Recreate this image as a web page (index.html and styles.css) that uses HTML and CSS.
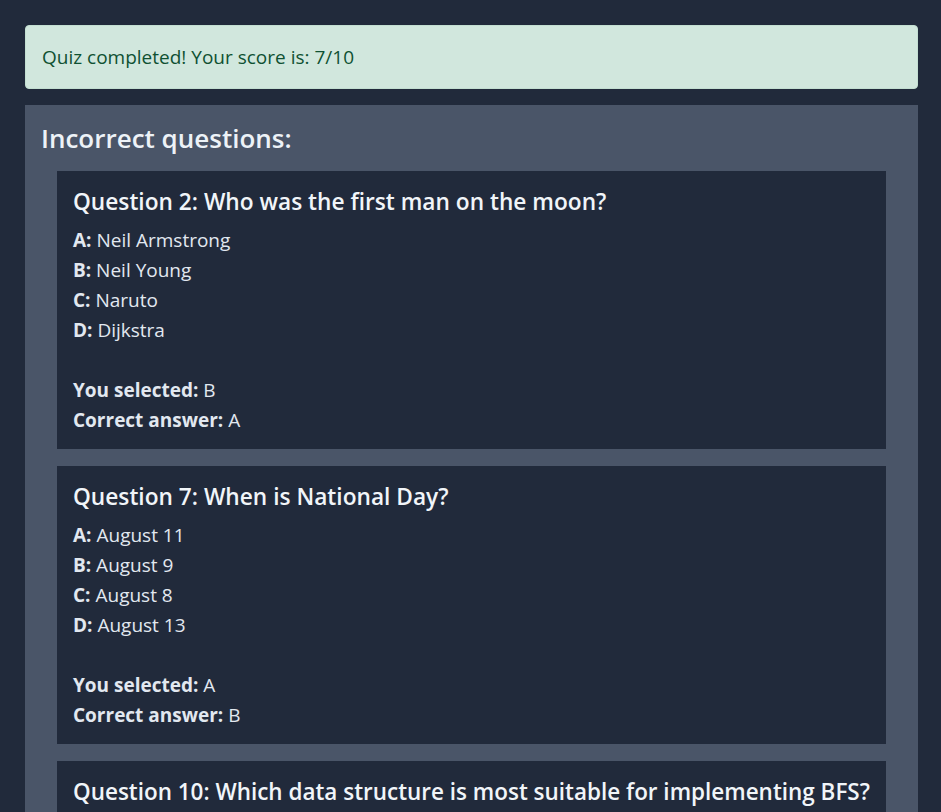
FILE: index.html
```html
<!DOCTYPE html>
<html lang="en">
<head>
<meta charset="utf-8">
<title>Quiz Results</title>
<link rel="stylesheet" href="styles.css">
</head>
<body>
<main class="page">
  <div class="alert">Quiz completed! Your score is: 7/10</div>
  <section class="panel">
    <h3 class="panel-title">Incorrect questions:</h3>
    <article class="card">
      <h4 class="q-title">Question 2: Who was the first man on the moon?</h4>
      <div class="opt"><b>A:</b> Neil Armstrong</div>
      <div class="opt"><b>B:</b> Neil Young</div>
      <div class="opt"><b>C:</b> Naruto</div>
      <div class="opt"><b>D:</b> Dijkstra</div>
      <div class="result">
        <div><b>You selected:</b> B</div>
        <div><b>Correct answer:</b> A</div>
      </div>
    </article>
    <article class="card">
      <h4 class="q-title">Question 7: When is National Day?</h4>
      <div class="opt"><b>A:</b> August 11</div>
      <div class="opt"><b>B:</b> August 9</div>
      <div class="opt"><b>C:</b> August 8</div>
      <div class="opt"><b>D:</b> August 13</div>
      <div class="result">
        <div><b>You selected:</b> A</div>
        <div><b>Correct answer:</b> B</div>
      </div>
    </article>
    <article class="card">
      <h4 class="q-title"><span class="squeeze">Question 10: Which data structure is most suitable for implementing BFS?</span></h4>
    </article>
  </section>
</main>
</body>
</html>
```
FILE: styles.css
```css
html, body {
  margin: 0;
  padding: 0;
  background: #212a3b;
  overflow: hidden;
}
body {
  font-family: "Open Sans", "Noto Sans", sans-serif;
  font-size: 19px;
  line-height: 30px;
  color: #e2e8f0;
}
.page {
  padding: 25px 23px 25px 25px;
}
.alert {
  background: #d1e7dd;
  color: #0f5132;
  border: 1px solid #c3dfd1;
  border-radius: 4px;
  padding: 16px 16px;
  margin-bottom: 16px;
}
.panel {
  background: #4a5568;
  padding: 16px;
}
.panel-title {
  margin: 0 0 16px 0;
  font-size: 26px;
  line-height: 34px;
  font-weight: 600;
  color: #edf2f7;
}
.card {
  background: #212a3b;
  margin: 0 16px 17px 16px;
  padding: 16px 16px 14px 16px;
}
.q-title {
  margin: 0 0 8px 0;
  font-size: 22.7px;
  line-height: 30px;
  font-weight: 600;
  color: #f1f5f9;
}
.squeeze {
  display: inline-block;
  white-space: nowrap;
  transform-origin: left center;
  transform: scaleX(0.99);
}
.opt b, .result b {
  font-weight: 700;
}
.result {
  margin-top: 30px;
}
```
